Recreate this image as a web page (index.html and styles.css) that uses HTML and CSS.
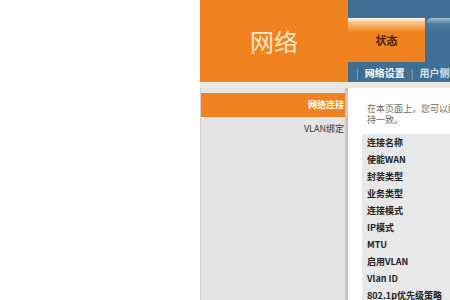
FILE: index.html
```html
<!DOCTYPE html>
<html lang="zh-CN">
<head>
    <meta charset="UTF-8">
    <title>网络 - 网络连接</title>
    <link rel="stylesheet" href="styles.css">
</head>
<body>
    <div class="blank"></div>

    <div class="app">
        <div class="header">
            <div class="brand">网络</div>
            <div class="nav">
                <div class="nav-top"></div>
                <div class="tabs">
                    <div class="tab active">状态</div>
                    <div class="tab"></div>
                </div>
                <div class="subnav">
                    <span class="sep">|</span>
                    <span class="sub current">网络设置</span>
                    <span class="sep">|</span>
                    <span class="sub">用户侧管理</span>
                </div>
            </div>
        </div>

        <div class="band"></div>

        <div class="main">
            <div class="sidebar">
                <div class="side-item active">网络连接</div>
                <div class="side-item">VLAN绑定</div>
            </div>

            <div class="content">
                <p class="intro">在本页面上，您可以配置WAN连接参数，请与运营商提供的参数保<br>持一致。</p>
                <table class="form-table">
                    <tr><td>连接名称</td></tr>
                    <tr><td>使能WAN</td></tr>
                    <tr><td>封装类型</td></tr>
                    <tr><td>业务类型</td></tr>
                    <tr><td>连接模式</td></tr>
                    <tr><td>IP模式</td></tr>
                    <tr><td>MTU</td></tr>
                    <tr><td>启用VLAN</td></tr>
                    <tr><td>Vlan ID</td></tr>
                    <tr><td>802.1p优先级策略</td></tr>
                </table>
            </div>
        </div>
    </div>
</body>
</html>
```

FILE: styles.css
```css
/* Global Styles */
body {
    margin: 0;
    padding: 0;
    display: flex;
    height: 300px;
    overflow: hidden;
    background-color: #ffffff;
    font-family: 'Noto Sans CJK SC', 'Liberation Sans', sans-serif;
}

.blank {
    width: 200px;
    flex-shrink: 0;
}

.app {
    width: 640px;
    flex-shrink: 0;
    display: flex;
    flex-direction: column;
}

/* Header */
.header {
    display: flex;
    height: 82px;
    flex-shrink: 0;
}

.brand {
    width: 148px;
    background-color: #f0831f;
    color: #fbe6c6;
    font-size: 24px;
    display: flex;
    align-items: center;
    justify-content: center;
    padding-bottom: 2px;
    box-sizing: border-box;
}

.nav {
    flex: 1;
    background-color: #3f6f93;
    display: flex;
    flex-direction: column;
}

.nav-top {
    height: 18px;
}

.tabs {
    height: 44px;
    display: flex;
    gap: 1px;
}

.tab {
    width: 77px;
    display: flex;
    align-items: center;
    justify-content: center;
    font-size: 11px;
    font-weight: bold;
    color: #3f6f93;
    background: linear-gradient(to bottom, #9fbdd3 0, #4d7a9c 6px, #3f6f93 14px);
    border-top-left-radius: 6px;
}

.tab.active {
    color: #4a2108;
    background: linear-gradient(to bottom, #fdf4ea 0, #f8c68f 4px, #f0831f 14px);
    border-top-left-radius: 0;
}

.subnav {
    height: 20px;
    display: flex;
    align-items: center;
    gap: 6px;
    padding-left: 8px;
    font-size: 10px;
    color: #dce7f0;
    white-space: nowrap;
}

.sub {
    font-weight: bold;
}

.sub.current {
    color: #ffffff;
}

.sep {
    color: #9db7cc;
    font-weight: normal;
}

.band {
    height: 6px;
    flex-shrink: 0;
    background-color: #ebe8e2;
}

/* Body */
.main {
    flex: 1;
    display: flex;
}

.sidebar {
    width: 148px;
    box-sizing: border-box;
    background-color: #e4e4e4;
    border-left: 1px solid #d3d3d3;
    border-right: 3px solid #c6c6c6;
    padding-top: 5px;
}

.side-item {
    height: 24px;
    line-height: 24px;
    text-align: right;
    padding-right: 1px;
    font-size: 9px;
    color: #333333;
}

.side-item.active {
    background-color: #f0831f;
    color: #ffffff;
    font-weight: bold;
}

.content {
    flex: 1;
    padding: 15px 14px 0 14px;
}

.intro {
    margin: 0 0 9px 5px;
    font-size: 9px;
    line-height: 11px;
    color: #666666;
}

.form-table {
    width: 100%;
    border-collapse: collapse;
    background-color: #e8e8e8;
}

.form-table td {
    height: 17px;
    padding: 0 0 0 5px;
    font-size: 9px;
    font-weight: bold;
    color: #222222;
}
```
